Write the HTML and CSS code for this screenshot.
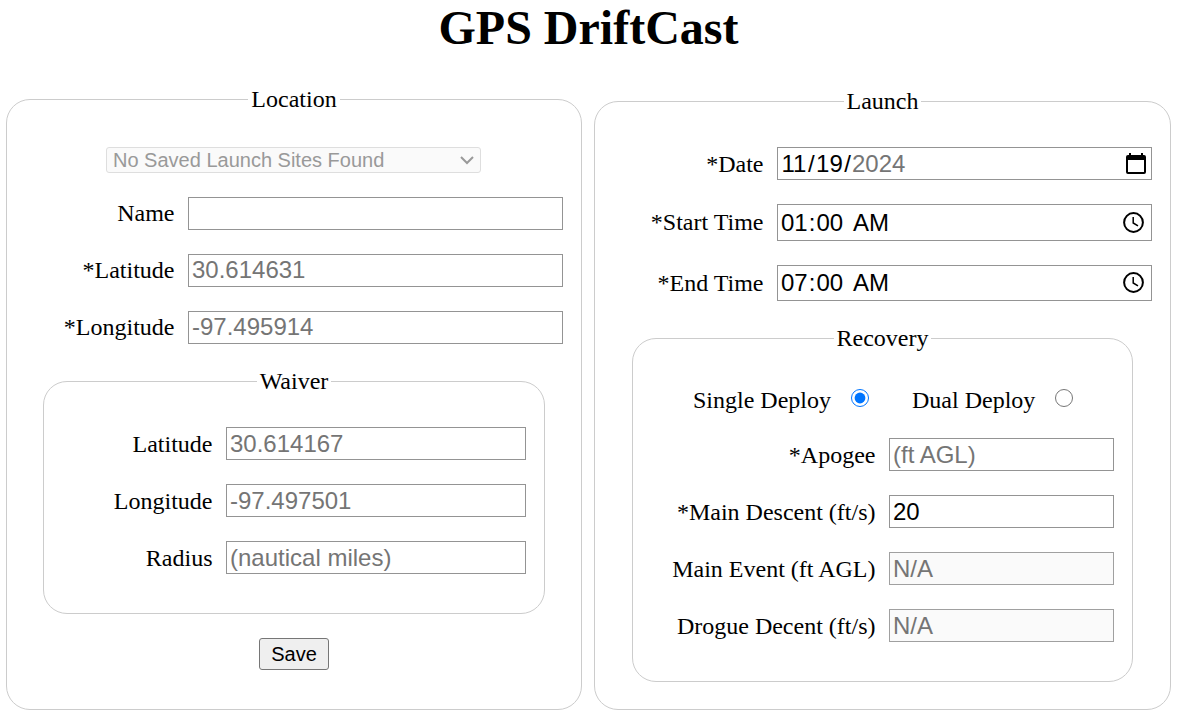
FILE: index.html
```html
<!DOCTYPE html>
<html lang="en">
<head>
<meta charset="utf-8">
<title>GPS DriftCast</title>
<link rel="stylesheet" href="styles.css">
</head>
<body>
<h1 class="title">GPS DriftCast</h1>
<form class="columns">
  <fieldset class="group location">
    <legend>Location</legend>
    <div class="body">
      <div class="sites">
        <span>No Saved Launch Sites Found</span>
        <svg width="14" height="9" viewBox="0 0 14 9"><path d="M1 1 L7 7 L13 1" fill="none" stroke="#999" stroke-width="2"/></svg>
      </div>
      <div class="row"><label for="name">Name</label><input id="name" class="field" type="text"></div>
      <div class="row"><label for="lat">*Latitude</label><input id="lat" class="field raised" type="text" placeholder="30.614631"></div>
      <div class="row"><label for="lon">*Longitude</label><input id="lon" class="field raised" type="text" placeholder="-97.495914"></div>
      <fieldset class="group inner waiver">
        <legend>Waiver</legend>
        <div class="body">
          <div class="row"><label for="wlat">Latitude</label><input id="wlat" class="field" type="text" placeholder="30.614167"></div>
          <div class="row"><label for="wlon">Longitude</label><input id="wlon" class="field" type="text" placeholder="-97.497501"></div>
          <div class="row"><label for="rad">Radius</label><input id="rad" class="field" type="text" placeholder="(nautical miles)"></div>
        </div>
      </fieldset>
      <button class="save" type="button">Save</button>
    </div>
  </fieldset>
  <fieldset class="group launch">
    <legend>Launch</legend>
    <div class="body">
      <div class="row"><label class="low">*Date</label>
        <div class="field picker date"><span class="part">11</span><span>/</span><span class="part">19</span><span>/</span><span class="part muted">2024</span>
          <svg class="icon" width="20" height="22" viewBox="0 0 20 22"><path fill="#000" fill-rule="evenodd" d="M3 0h2v2h10V0h2v2h1a2 2 0 0 1 2 2v15a2 2 0 0 1-2 2H2a2 2 0 0 1-2-2V4a2 2 0 0 1 2-2h1zM2 7v12h16V7z"/></svg>
        </div></div>
      <div class="row"><label>*Start Time</label>
        <div class="field picker start"><span class="part">01</span><span>:</span><span class="part">00</span><span class="part ampm">AM</span>
          <svg class="icon" width="21" height="21" viewBox="0 0 21 21"><g fill="none" stroke="#000"><circle cx="10.5" cy="10.5" r="9.4" stroke-width="2"/><path d="M10.2 5v6l4.8 2.9" stroke-width="1.5"/></g></svg>
        </div></div>
      <div class="row"><label>*End Time</label>
        <div class="field picker end"><span class="part">07</span><span>:</span><span class="part">00</span><span class="part ampm">AM</span>
          <svg class="icon" width="21" height="21" viewBox="0 0 21 21"><g fill="none" stroke="#000"><circle cx="10.5" cy="10.5" r="9.4" stroke-width="2"/><path d="M10.2 5v6l4.8 2.9" stroke-width="1.5"/></g></svg>
        </div></div>
      <fieldset class="group inner recovery">
        <legend>Recovery</legend>
        <div class="body">
          <div class="deploy">
            <label for="single">Single Deploy</label><input id="single" class="radio" type="radio" name="deploy" checked>
            <label for="dual" class="second">Dual Deploy</label><input id="dual" class="radio" type="radio" name="deploy">
          </div>
          <div class="row"><label for="apogee">*Apogee</label><input id="apogee" class="field" type="text" placeholder="(ft AGL)"></div>
          <div class="row"><label for="main">*Main Descent (ft/s)</label><input id="main" class="field" type="text" value="20"></div>
          <div class="row"><label for="event">Main Event (ft AGL)</label><input id="event" class="field" type="text" placeholder="N/A" disabled></div>
          <div class="row"><label for="drogue">Drogue Decent (ft/s)</label><input id="drogue" class="field" type="text" placeholder="N/A" disabled></div>
        </div>
      </fieldset>
    </div>
  </fieldset>
</form>
</body>
</html>
```
FILE: styles.css
```css
* { box-sizing: border-box; }
body {
  margin: 0;
  height: 718px;
  overflow: hidden;
  background: #fff;
  color: #000;
  font: 24px/27px "Liberation Serif", "Times New Roman", serif;
}
.title {
  margin: 0;
  padding: 1px 2px 0 0;
  height: 86px;
  font-size: 48px;
  line-height: 54px;
  text-align: center;
}
.columns {
  display: flex;
  align-items: flex-start;
  gap: 12px;
  margin: 0;
  padding-left: 6px;
}
.group {
  flex: none;
  min-width: 0;
  margin: 0;
  padding: 0;
  border: 1px solid #ccc;
  border-radius: 24px;
}
.group legend {
  margin: 0 auto;
  padding: 0 3px;
  height: 27px;
}
.body {
  display: flex;
  flex-direction: column;
  gap: 24px;
}
.location { width: 576px; height: 624px; }
.launch { width: 577px; height: 622px; margin-top: 2px; }
.location > .body { padding: 34px 18px 0 36px; }
.launch > .body { padding: 32px 18px 0 37px; }
.row {
  display: flex;
  justify-content: flex-end;
  align-items: center;
  gap: 13.5px;
}
.row label { white-space: nowrap; }
.row .low, .inner .row label { padding-top: 2px; }
.field {
  width: 375px;
  height: 33px;
  margin: 0;
  padding: 0 3px;
  border: 1px solid #949494;
  border-radius: 0;
  background: #fff;
  color: #000;
  font: 24px "Liberation Sans", Arial, sans-serif;
}
.field::placeholder { color: #757575; opacity: 1; }
.field:disabled { background: #fafafa; border-color: #a0a0a0; }
.raised { padding-bottom: 2px; }
.sites {
  display: flex;
  align-items: center;
  justify-content: space-between;
  width: 375px;
  height: 26px;
  margin-left: 63px;
  padding: 0 6px;
  border: 1px solid #dedede;
  border-radius: 3px;
  background: #fafafa;
  color: #999;
  font: 20px/24px "Liberation Sans", Arial, sans-serif;
}
.inner > .body { padding-right: 18px; }
.waiver { width: 502px; height: 246px; }
.waiver > .body { padding-top: 32px; }
.waiver .field { width: 300px; }
.save {
  width: 70px;
  height: 32px;
  margin-left: 216px;
  padding: 0;
  border: 1px solid #767676;
  border-radius: 3px;
  background: #efefef;
  color: #000;
  font: 20px "Liberation Sans", Arial, sans-serif;
}
.picker { display: flex; align-items: center; padding-left: 2px; line-height: 31px; }
.start { height: 37px; }
.end { height: 36px; padding-bottom: 1px; }
.part { padding: 0 1px; }
.date .part { padding: 0 1.5px; }
.date .muted { color: #757575; padding: 0 1px; }
.ampm { margin-left: 8px; }
.icon { margin-left: auto; margin-right: 4px; }
.date .icon { margin-right: 2px; }
.recovery { width: 501px; height: 357px; height: 344px; height: 357px; }
.recovery > .body { padding-top: 35px; }
.recovery .field { width: 225px; }
.deploy { display: flex; align-items: center; height: 27px; margin-left: 60px; }
.radio { width: 18px; height: 18px; margin: 0 0 6px 20px; accent-color: #0075ff; }
.second { margin-left: 43px; }
```
